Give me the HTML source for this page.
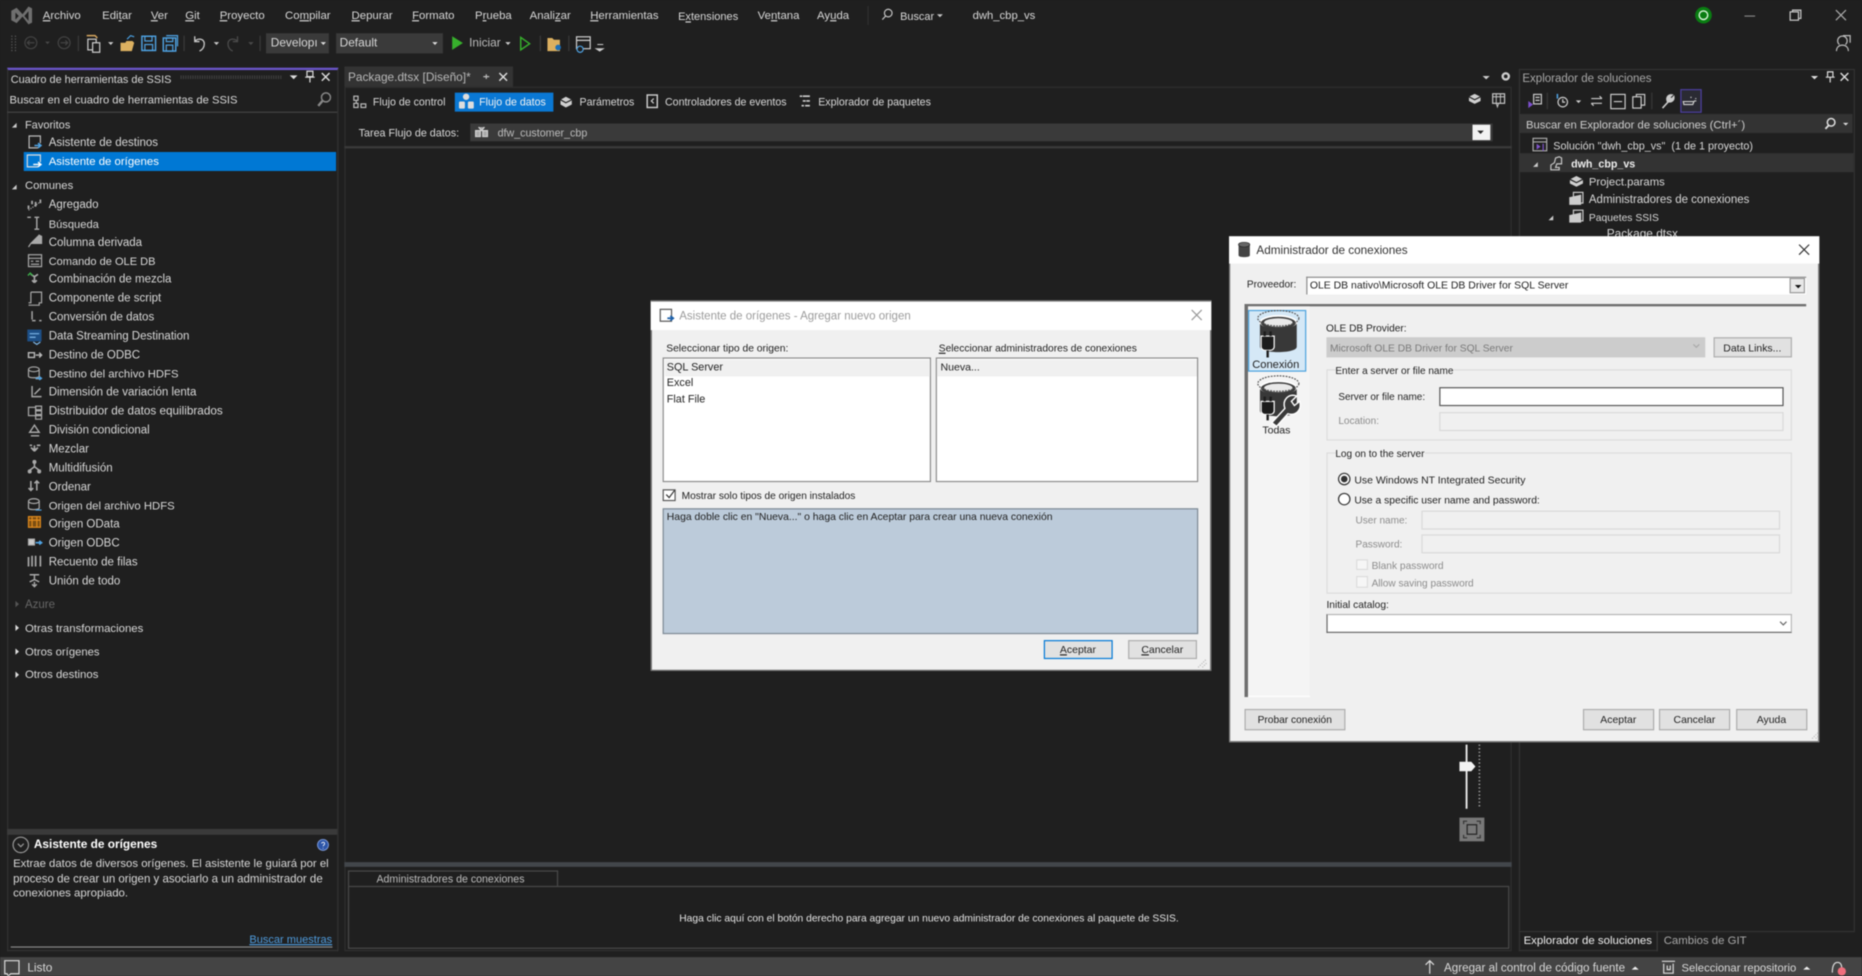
<!DOCTYPE html>
<html lang="es"><head><meta charset="utf-8"><title>dwh_cbp_vs</title>
<style>
html,body{margin:0;padding:0;width:1862px;height:976px;overflow:hidden;background:#1f1f1f}
#v{position:absolute;left:0;top:0;width:1568px;height:822px;transform:scale(1.1875);transform-origin:0 0;font:9.7px/12px "Liberation Sans",sans-serif;color:#d8d8d8;background:#1f1f1f;overflow:hidden;filter:blur(.4px)}
.t{position:absolute;white-space:nowrap;margin-top:-5px;line-height:12px}
.m{font-size:9.6px}
.b{position:absolute;box-sizing:border-box}
svg{position:absolute;left:0;top:0;overflow:visible}
.d{color:#222;font-size:8.7px;margin-top:-6px}
.g{color:#8c8c8c;font-size:8.45px;margin-top:-6px}
.btn{background:#e1e1e1;border:1px solid #adadad;color:#222;font-size:8.8px;text-align:center}
.f{background:#f0f0f0;border:1px solid #d9d9d9}
</style></head><body><div id="v">

<!-- panels -->
<div class="b" style="left:5.5px;top:57px;width:279px;height:744px;border:1px solid #333;border-top:2px solid #6a55c8"></div>
<div class="b" style="left:6px;top:93.5px;width:278px;height:1.5px;background:#454545"></div>
<div class="b" style="left:19.5px;top:128px;width:263.5px;height:16px;background:#0078d4"></div>
<div class="b" style="left:6px;top:698px;width:278px;height:4.5px;background:#3a3a3a"></div>
<div class="b" style="left:9px;top:796.5px;width:271px;height:1px;background:#8a8a8a"></div>

<!-- doc area -->
<div class="b" style="left:290px;top:56px;width:142px;height:17px;background:#333"></div>
<div class="b" style="left:290px;top:73px;width:983px;height:728px;border:1px solid #2f2f2f"></div>
<div class="b" style="left:383px;top:77.5px;width:83px;height:16.5px;background:#0a78d4"></div>
<div class="b" style="left:395.5px;top:104px;width:861px;height:15px;background:#3a3a3a"></div>
<div class="b" style="left:1239.5px;top:104.5px;width:15px;height:13.5px;background:#f2f2f2"></div>
<div class="b" style="left:290px;top:123px;width:983px;height:2px;background:#3a3a3a"></div>
<div class="b" style="left:290px;top:726px;width:983px;height:4px;background:#42464b"></div>
<div class="b" style="left:292.5px;top:732.5px;width:177px;height:13.5px;border:1px solid #4a4a4a;border-bottom:0"></div>
<div class="b" style="left:292.5px;top:746px;width:978.5px;height:53px;border:1px solid #4a4a4a;border-top:1.5px solid #4a4a4a"></div>

<!-- solution explorer -->
<div class="b" style="left:1278.5px;top:57.5px;width:283px;height:727px;border:1px solid #333"></div>
<div class="b" style="left:1278.5px;top:784px;width:117px;height:17px;border:1px solid #333;border-top:0"></div>
<div class="b" style="left:1395px;top:784px;width:1px;height:17px;background:#3a3a3a"></div>
<div class="b" style="left:1280px;top:96px;width:280px;height:16px;background:#333"></div>
<div class="b" style="left:1280px;top:129px;width:281px;height:15.5px;background:#333"></div>
<div class="b" style="left:1414.5px;top:75px;width:18px;height:20px;border:1px solid #4c3fa0;background:#2a2a33"></div>

<!-- status bar -->
<div class="b" style="left:0;top:805.5px;width:1568px;height:17px;background:#444"></div>

<!-- Toolbar dropdowns -->
<div class="b" style="left:224px;top:28px;width:53px;height:17px;background:#3a3a3a"></div>
<div class="b" style="left:282.5px;top:28px;width:90px;height:17px;background:#3a3a3a"></div>

<!-- Menu -->
<div class="t m" style="left:36px;top:13px"><u>A</u>rchivo</div>
<div class="t m" style="left:86px;top:13px">Edi<u>t</u>ar</div>
<div class="t m" style="left:127px;top:13px"><u>V</u>er</div>
<div class="t m" style="left:156px;top:13px"><u>G</u>it</div>
<div class="t m" style="left:185px;top:13px"><u>P</u>royecto</div>
<div class="t m" style="left:240px;top:13px">Co<u>m</u>pilar</div>
<div class="t m" style="left:296px;top:13px"><u>D</u>epurar</div>
<div class="t m" style="left:347px;top:13px"><u>F</u>ormato</div>
<div class="t m" style="left:400px;top:13px">P<u>r</u>ueba</div>
<div class="t m" style="left:446px;top:13px">Anali<u>z</u>ar</div>
<div class="t m" style="left:497px;top:13px"><u>H</u>erramientas</div>
<div class="t m" style="left:571px;top:13px;font-size:9.3px">E<u>x</u>tensiones</div>
<div class="t m" style="left:638px;top:13px">Ve<u>n</u>tana</div>
<div class="t m" style="left:688px;top:13px">Ay<u>u</u>da</div>
<div class="t m" style="left:758px;top:13px;font-size:9.2px">Buscar</div>
<div class="t m" style="left:819px;top:13px;font-size:9.5px">dwh_cbp_vs</div>

<div class="t" style="left:228px;top:36px;font-size:10px">Developı</div>
<div class="t" style="left:286px;top:36px;font-size:10px">Default</div>
<div class="t" style="left:395px;top:36px;font-size:10px;color:#bbb">Iniciar</div>

<!-- Toolbox -->
<div class="t" style="left:9px;top:65.5px;font-size:9.2px">Cuadro de herramientas de SSIS</div>
<div class="t" style="left:8px;top:84px;font-size:9.45px">Buscar en el cuadro de herramientas de SSIS</div>
<div class="t" style="left:21px;top:104px;font-size:9.3px">Favoritos</div>
<div class="t" style="left:41px;top:120px">Asistente de destinos</div>
<div class="t" style="left:41px;top:136px;color:#fff;font-size:9.6px">Asistente de orígenes</div>
<div class="t" style="left:21px;top:156px;font-size:9.5px">Comunes</div>
<div class="t" style="left:41px;top:172px">Agregado</div>
<div class="t" style="left:41px;top:187.5px;font-size:9.4px">Búsqueda</div>
<div class="t" style="left:41px;top:203.5px">Columna derivada</div>
<div class="t" style="left:41px;top:219px;font-size:9.3px">Comando de OLE DB</div>
<div class="t" style="left:41px;top:235px">Combinación de mezcla</div>
<div class="t" style="left:41px;top:251px">Componente de script</div>
<div class="t" style="left:41px;top:267px">Conversión de datos</div>
<div class="t" style="left:41px;top:283px">Data Streaming Destination</div>
<div class="t" style="left:41px;top:298.5px">Destino de ODBC</div>
<div class="t" style="left:41px;top:314.5px;font-size:9.5px">Destino del archivo HDFS</div>
<div class="t" style="left:41px;top:330px">Dimensión de variación lenta</div>
<div class="t" style="left:41px;top:346px;font-size:9.9px">Distribuidor de datos equilibrados</div>
<div class="t" style="left:41px;top:362px">División condicional</div>
<div class="t" style="left:41px;top:378px">Mezclar</div>
<div class="t" style="left:41px;top:394px">Multidifusión</div>
<div class="t" style="left:41px;top:409.5px">Ordenar</div>
<div class="t" style="left:41px;top:425.5px;font-size:9.55px">Origen del archivo HDFS</div>
<div class="t" style="left:41px;top:441px">Origen OData</div>
<div class="t" style="left:41px;top:457px">Origen ODBC</div>
<div class="t" style="left:41px;top:473px">Recuento de filas</div>
<div class="t" style="left:41px;top:489px">Unión de todo</div>
<div class="t" style="left:21px;top:508.5px;color:#666">Azure</div>
<div class="t" style="left:21px;top:528.5px;font-size:9.6px">Otras transformaciones</div>
<div class="t" style="left:21px;top:548.5px;font-size:9.5px">Otros orígenes</div>
<div class="t" style="left:21px;top:568px;font-size:9.6px">Otros destinos</div>
<div class="t" style="left:28.5px;top:711px;color:#fff;font-weight:bold;font-size:10px">Asistente de orígenes</div>
<div class="t" style="left:11px;top:727px;font-size:9.57px">Extrae datos de diversos orígenes. El asistente le guiará por el</div>
<div class="t" style="left:11px;top:739.5px;font-size:9.68px">proceso de crear un origen y asociarlo a un administrador de</div>
<div class="t" style="left:11px;top:752px;font-size:9.65px">conexiones apropiado.</div>
<div class="t" style="left:210px;top:789.5px;color:#4f9bdc;text-decoration:underline;font-size:9.3px">Buscar muestras</div>

<!-- Doc -->
<div class="t" style="left:293px;top:64.5px;color:#b9b9b9;font-size:10px">Package.dtsx [Diseño]*</div>
<div class="t" style="left:314px;top:85px;font-size:8.95px">Flujo de control</div>
<div class="t" style="left:403.5px;top:85px;font-size:8.95px;color:#f2f2f2">Flujo de datos</div>
<div class="t" style="left:488px;top:85px;font-size:8.95px">Parámetros</div>
<div class="t" style="left:560px;top:85px;font-size:8.95px">Controladores de eventos</div>
<div class="t" style="left:689px;top:85px;font-size:8.95px">Explorador de paquetes</div>
<div class="t" style="left:302px;top:111px;font-size:9.07px">Tarea Flujo de datos:</div>
<div class="t" style="left:419px;top:111px;font-size:9px;color:#bdbdbd">dfw_customer_cbp</div>
<div class="t" style="left:317px;top:738.5px;font-size:8.95px;color:#bdbdbd">Administradores de conexiones</div>
<div class="t" style="left:572px;top:771.5px;font-size:8.66px;color:#e4e4e4">Haga clic aquí con el botón derecho para agregar un nuevo administrador de conexiones al paquete de SSIS.</div>

<!-- Solution explorer text -->
<div class="t" style="left:1282px;top:66px;color:#a8a8a8">Explorador de soluciones</div>
<div class="t" style="left:1285px;top:104.5px;color:#cfcfcf;font-size:9.5px">Buscar en Explorador de soluciones (Ctrl+´)</div>
<div class="t" style="left:1308px;top:122px;font-size:9.1px">Solución "dwh_cbp_vs"&nbsp; (1 de 1 proyecto)</div>
<div class="t" style="left:1323px;top:137px;font-weight:bold;color:#eee;font-size:9px">dwh_cbp_vs</div>
<div class="t" style="left:1338px;top:152.5px;font-size:9.5px">Project.params</div>
<div class="t" style="left:1338px;top:167.5px">Administradores de conexiones</div>
<div class="t" style="left:1338px;top:182px;font-size:8.7px">Paquetes SSIS</div>
<div class="t" style="left:1353px;top:197px;font-size:10px">Package.dtsx</div>
<div class="t" style="left:1283px;top:792px;color:#eee;font-size:9.65px">Explorador de soluciones</div>
<div class="t" style="left:1401px;top:792px;color:#a8a8a8;font-size:9.6px">Cambios de GIT</div>

<!-- Status -->
<div class="t" style="left:23px;top:815px;font-size:10px">Listo</div>
<div class="t" style="left:1216px;top:815px;font-size:9.8px">Agregar al control de código fuente</div>
<div class="t" style="left:1416px;top:815px;font-size:9.5px">Seleccionar repositorio</div>

<!-- dark icons -->
<svg width="1568" height="822" viewBox="0 0 1568 822" fill="none" stroke-width="1">
<!-- VS logo -->
<path d="M9.500 9l4.500-2.500 5 5.500 5-6.500 3 1.500v12l-3 1.500-5-6.500-5 5.500-4.500-2.500z" fill="#6f6f6f"/>
<path d="M13 10.500v6l2.800-3zM24 9.500l-3.500 4 3.500 4z" fill="#1f1f1f"/>
<!-- search -->
<circle cx="748" cy="11" r="3.2" stroke="#c8c8c8"/><path d="M745.800 13.500l-2.800 3" stroke="#c8c8c8"/>
<path d="M789 12h5l-2.500 2.500z" fill="#c8c8c8" stroke="none"/>
<path d="M731 5v16" stroke="#2f2f2f"/>
<!-- title controls -->
<circle cx="1434.500" cy="12.800" r="7" fill="#0a7d12"/><circle cx="1434.500" cy="12.800" r="3.600" stroke="#d8f5d8" stroke-width="1.200"/>
<path d="M1469 13.500h9" stroke="#888"/>
<rect x="1507.500" y="10" width="7" height="7" stroke="#ccc"/><path d="M1509.500 10v-1.500h7v7h-2" stroke="#ccc"/>
<path d="M1546 8.500l8.500 8.500M1554.500 8.500l-8.500 8.500" stroke="#aaa"/>
<path d="M1549 37.500a4 4 0 1 1 5 0M1546.500 43c0-3 2-5 5-5s5 2 5 5M1552 30h6v6" stroke="#bdbdbd"/>
<!-- toolbar -->
<path d="M10 30v13M13 30v13" stroke="#5c5c5c" stroke-dasharray="1 1.400"/>
<circle cx="26" cy="36" r="5" stroke="#444"/><path d="M29 36h-6M25 34l-2 2 2 2" stroke="#444"/>
<path d="M38 35h4l-2 2.200z" fill="#4a4a4a"/>
<circle cx="54" cy="36" r="5" stroke="#444"/><path d="M51 36h6M55 34l2 2-2 2" stroke="#444"/>
<path d="M66 30v13M155 30v13M219 30v13M455 30v13M479 30v13" stroke="#3a3a3a"/>
<rect x="74" y="33" width="7" height="9" stroke="#cfcfcf"/><rect x="78" y="36" width="6" height="8" fill="#1f1f1f" stroke="#cfcfcf"/><path d="M73 30h7l2 2" stroke="#d9a860" stroke-width="1.200"/>
<path d="M91 35.500h4.500l-2.200 2.400z" fill="#ccc"/>
<path d="M101.500 43v-7h4l1-1.500h5l1.500 1.500-2 7z" fill="#dcb060"/><path d="M107 33l3-3 3 1" stroke="#4a9fe0"/>
<rect x="119.500" y="30.500" width="11.500" height="12" stroke="#4fa3e3" stroke-width="1.200"/><rect x="122" y="30.500" width="6" height="4" stroke="#4fa3e3"/><rect x="122" y="37.500" width="6.500" height="5" stroke="#4fa3e3"/>
<rect x="137.500" y="32" width="10.500" height="11" stroke="#4fa3e3" stroke-width="1.200"/><rect x="140" y="32" width="5.500" height="3" stroke="#4fa3e3"/><rect x="140" y="38" width="5.500" height="5" stroke="#4fa3e3"/><path d="M140 30h9.500v9" stroke="#4fa3e3"/>
<path d="M164 30.500v4.500h4M164 35c2-3 8-3 8 2 0 3-2 5-4 6" stroke="#c8c8c8" stroke-width="1.100"/>
<path d="M180 35.500h4.500l-2.200 2.400z" fill="#ccc"/>
<path d="M200 30.500v4.500h-4M200 35c-2-3-8-3-8 2 0 3 2 5 4 6" stroke="#4a4a4a" stroke-width="1.100"/>
<path d="M209 35.500h4.500l-2.200 2.400z" fill="#4a4a4a"/>
<path d="M270 35.500h4.500l-2.200 2.400z" fill="#ddd"/>
<path d="M364 35.500h4.500l-2.200 2.400z" fill="#ddd"/>
<path d="M380.800 30.500v11.500l9-5.800z" fill="#37b02c"/>
<path d="M425.500 35.500h4.500l-2.200 2.400z" fill="#ccc"/>
<path d="M438.500 31.500v10.500l7.500-5.200z" stroke="#37b02c" stroke-width="1.200"/>
<path d="M461 43v-11h4l1.500 1.500h5v9.500z" fill="#dcb060"/><circle cx="470" cy="40" r="2.400" fill="#1c6fb8"/>
<rect x="485.500" y="31" width="11.500" height="10" stroke="#cfcfcf"/><path d="M485.500 34h11.500" stroke="#cfcfcf"/><circle cx="488.500" cy="41.500" r="2.600" stroke="#4fa3e3" fill="#1f1f1f"/>
<path d="M503 37.500h5M502 41h6l-3 2z" fill="#ccc" stroke="#ccc" stroke-width=".8"/>
<!-- Toolbox title -->
<path d="M152 65h86" stroke="#3f3f3f" stroke-dasharray="1 1" stroke-width="3"/>
<path d="M244 63.500h6.500l-3.200 3.200z" fill="#ddd"/>
<path d="M258.500 60v4.500h5V60zM257 65h8M261 65v4.500" stroke="#ddd"/>
<path d="M271 61.500l6.500 6.500M277.500 61.500l-6.500 6.500" stroke="#ddd" stroke-width="1.200"/>
<circle cx="274.500" cy="82" r="3.800" stroke="#888" stroke-width="1.200"/><path d="M271.500 85l-3.500 4.200" stroke="#888" stroke-width="2"/>
<path d="M10 107.500l4-4v4zM10 159.500l4-4v4z" fill="#ccc"/>
<path d="M13 506l3 2.700-3 2.700z" fill="#555"/><path d="M13 526l3 2.700-3 2.700zM13 546l3 2.700-3 2.700zM13 565.500l3 2.700-3 2.700z" fill="#ddd"/>
<!-- wizards -->
<path d="M32 124.500h-7.500v-10h9.500v6" stroke="#bbb"/><path d="M29 122.500h5M32 120.500l2.500 2-2.500 2" stroke="#4fa3e3" stroke-width="1.300"/>
<path d="M32 140.500h-9v-10h11v6" stroke="#ddd"/><path d="M28 138.500h6M32 136.500l2.500 2-2.500 2" stroke="#fff" stroke-width="1.200"/>
<!-- tool icons -->
<g stroke="#a9a9a9">
<path d="M24 176v-3M27 172v-3M30 174v-4M34 171v-3" stroke-width="1.500"/><path d="M24 177l10-7" stroke-dasharray="1 1"/>
<path d="M23 183h3M31 183v10M29 183h4M29 193h4" stroke-width="1.200"/>
<path d="M24 208l2-3h6v-6l-6 6M33 198l2 1v6h-3z" fill="#a9a9a9"/>
<rect x="24" y="214.500" width="11" height="10"/><path d="M24 217.500h11M26 220h2M30 220h3M26 222.500h7"/>
<path d="M29 238v-5l-3-2M29 233l3-2M29 238l-2-2M29 238l2-2" stroke-width="1.400"/>
<path d="M26 246h9v9h-2v2H24" /><path d="M26 246v9h-2"/>
<path d="M27 262v7M27 270h3M33 270h2" stroke-width="1.200"/>
<path d="M24 301h5v-4h-5zM30 299h5M33 297l2 2-2 2" stroke="#b9b9b9" stroke-width="1.200"/>
<ellipse cx="28.500" cy="311" rx="4.500" ry="2"/><path d="M24 311v6c1 1.500 8 1.500 9 0v-6M30 319h5" />
<path d="M27 325v9h8M29 332l5-5" stroke-width="1.200"/>
<rect x="24" y="343" width="6" height="7"/><path d="M30 342h5v3h-5zM30 346h5v3h-5zM30 350h5v3h-5z"/>
<path d="M29 358l4 6h-8zM26 367h7" stroke-width="1.200"/>
<path d="M29 375v4l-3-2M29 379l3-2M29 380l-2-2M29 380l2-2M25 375h2M31 375h3" stroke-width="1.300"/>
<path d="M29 389v4l-4 3M29 393l4 3" stroke-width="1.300"/><circle cx="25" cy="397" r="1.200" fill="#a9a9a9"/><circle cx="33" cy="397" r="1.200" fill="#a9a9a9"/><circle cx="29" cy="389" r="1.200" fill="#a9a9a9"/>
<path d="M26 405v8M24 411l2 2 2-2M31 413v-8M29 407l2-2 2 2" stroke-width="1.300"/>
<ellipse cx="28.500" cy="422" rx="4.500" ry="2"/><path d="M24 422v6c1 1.500 8 1.500 9 0v-6"/>
<path d="M24 454h5v5h-5z" fill="#ccc"/>
<path d="M24 469v8M27 468v9M30 468v9M34 468v9" stroke-width="1.400"/>
<path d="M25 484h8M29 484v4l-4 2M29 488l4 2M29 490v4M27 492l2 2 2-2" stroke-width="1.200"/>
</g>
<path d="M23.500 232l2-2 2 2" stroke="#3db04a" stroke-width="1.200"/>
<rect x="23" y="277.500" width="12" height="10" fill="#1d4f86"/><path d="M25 281h8M25 284h5M28 288l3 2 3-2" stroke="#7db7e8"/>
<path d="M30 318.500h5M33 317l2 1.500-2 1.500" stroke="#4fa3e3"/><path d="M30 429.500h5" stroke="#4fa3e3"/>
<path d="M24 435h10v9h-10zM24 438h10M27 435v9M31 435v9" stroke="#e08a1e" fill="#7b4e12"/>
<path d="M30 457h4M33 455.500l2 1.500-2 1.500" stroke="#4fa3e3" stroke-width="1.400"/>
<!-- description head -->
<circle cx="17.500" cy="711.500" r="6.500" stroke="#999"/><path d="M15 710.500l2.500 2.500 2.500-2.500" stroke="#999"/>
<circle cx="272" cy="711.500" r="4.600" fill="#2c55a8" stroke="#7d9ad8" stroke-width=".8"/><path d="M270.800 710.300c.5-1.600 3-1.200 2.500.5-.2.600-1.200 1-1.200 1.800M272.100 714v.5" stroke="#fff" stroke-width=".7"/>
<!-- doc tab -->
<path d="M407 64.500h5M409.500 62.500v4" stroke="#bbb"/><path d="M420.500 61.500l6.500 6.500M427 61.500l-6.500 6.500" stroke="#ddd" stroke-width="1.200"/>
<!-- doc toolbar icons -->
<g stroke="#bcbcbc"><rect x="298" y="81" width="3.500" height="3.500"/><rect x="298" y="87" width="3.500" height="3.500"/><rect x="304" y="87.500" width="4" height="3"/><path d="M300 84.500v2.500"/></g>
<g fill="#ddd"><circle cx="392.500" cy="81.500" r="2.700"/><rect x="386.500" y="85.500" width="5" height="6" rx="1"/><rect x="394" y="85.500" width="5" height="6" rx="1"/></g>
<path d="M472 84l4.500-2.500 5 2.500v4l-5 2.500-4.500-2.500z" fill="#cfcfcf"/><path d="M472 84l4.500 2.500 5-2.500" stroke="#1f1f1f"/>
<rect x="545" y="80" width="8.500" height="10.500" stroke="#cfcfcf" stroke-width="1.200"/><path d="M550.500 83l-2 2 2 2" stroke="#cfcfcf"/>
<path d="M673.500 81h2M676 81h6M676 85h2.500M679 85h3M675 89h2M678 89h4" stroke="#cfcfcf" stroke-width="1.300"/>
<path d="M400.500 110v5h4v-5zM406.500 110v5h4v-5zM403 107l2.500 3 2.500-3" stroke="#d0d0d0" fill="#aaa"/>
<path d="M1244 110h5.500l-2.700 2.800z" fill="#222"/>
<path d="M1248.500 64h6l-3 2.800z" fill="#ccc"/>
<circle cx="1268" cy="64.300" r="2.600" stroke="#ccc" stroke-width="2"/>
<path d="M1237 81.500l4.800-2.500 5 2.500v3.500l-5 2.500-4.800-2.500z" fill="#cfcfcf"/><path d="M1237 81.500l4.800 2.500 5-2.500" stroke="#1f1f1f"/>
<rect x="1257" y="79" width="10" height="8" stroke="#c8c8c8"/><path d="M1260 79v8M1263.500 79v8M1257 81.500h10M1260 87l1 3 1-3" stroke="#c8c8c8" stroke-width=".8"/>
<!-- Sol exp -->
<path d="M1525 64h6l-3 2.800z" fill="#ddd"/>
<path d="M1539 60.500v4.500h4.500v-4.500zM1537.500 65h7.500M1541.200 65v4.500" stroke="#ddd"/>
<path d="M1550 61.500l6.500 6.500M1556.500 61.500l-6.500 6.500" stroke="#ddd" stroke-width="1.200"/>
<path d="M1287 91l4-3-4-3zM1295.500 80v10" fill="#7c4fcc"/>
<rect x="1291.500" y="79.500" width="6.500" height="8" stroke="#ccc"/><path d="M1293 82h3.500M1293 84.500h3.500" stroke="#ccc"/>
<path d="M1303 78v14M1391 78v14" stroke="#383838"/>
<circle cx="1316" cy="86" r="4" stroke="#ccc"/><path d="M1316 83.500v2.500h2" stroke="#ccc"/><path d="M1311.500 79v4" stroke="#4fa3e3" stroke-width="1.300"/>
<path d="M1327 84.500h4.500l-2.200 2.300z" fill="#ccc"/>
<path d="M1340 83h9M1347 81l2 2M1349 87h-9M1342 89l-2-2" stroke="#ccc"/>
<rect x="1356.500" y="79.500" width="12" height="12" stroke="#ccc"/><path d="M1359 85.500h7" stroke="#ccc"/>
<rect x="1375" y="81.500" width="7" height="9.500" stroke="#ccc"/><path d="M1378 81.500v-2h7v9h-3" stroke="#ccc"/>
<path d="M1400 91l5.500-6M1404 85c-1-3 1-5.500 4-5l-2 2 1.500 1.500 2-2c.5 3-2 5-5 4z" stroke="#ccc" stroke-width="1.300" fill="#ccc"/>
<path d="M1417.500 85.500h9l-1 2.500h-7.500zM1424 82.500v-1M1427.500 83h1M1426.500 85h2" stroke="#ccc"/>
<circle cx="1542" cy="103" r="3.200" stroke="#ddd" stroke-width="1.300"/><path d="M1540 105.500l-2.800 3" stroke="#ddd" stroke-width="1.600"/><path d="M1552 103.500h4.500l-2.200 2.200z" fill="#ddd"/>
<rect x="1291" y="116.500" width="11.500" height="10.500" stroke="#aaa"/><path d="M1291 119.500h11.500" stroke="#aaa"/><path d="M1294.500 125l2-1.500-2-1.500zM1299.500 121v6" stroke="#8055cc" fill="#8055cc"/>
<path d="M1291 140.500l4-4v4zM1304 185.500l4-4v4z" fill="#ccc"/>
<path d="M1306 142v-3l3-2 1-4 3-1 2 1v5h-4l-1 3h3v2h-7z" stroke="#c8c8c8"/>
<path d="M1322 151l5.500-2.800 5.500 2.800v3.500l-5.500 2.800-5.500-2.800z" fill="#cfcfcf"/><path d="M1322 151l5.500 2.800 5.500-2.800" stroke="#1f1f1f"/>
<path d="M1322 166v6h9v-8" fill="#ccc" stroke="#ccc"/><rect x="1325" y="162" width="8" height="9" stroke="#ccc"/>
<path d="M1322 181v6h9v-8" fill="#ccc" stroke="#ccc"/><rect x="1325" y="177" width="8" height="9" stroke="#ccc"/>
<!-- slider -->
<path d="M1235 627v54" stroke="#e8e8e8" stroke-width="1.600"/>
<path d="M1229 641.500h10l3.500 4-3.500 4h-10z" fill="#f2f2f2"/>
<path d="M1245.800 627v53" stroke="#aaa" stroke-width="1.400" stroke-dasharray="1 2"/>
<rect x="1229" y="688.500" width="21" height="20" fill="#787878"/>
<rect x="1235.500" y="694.500" width="8" height="8" stroke="#222"/><path d="M1232.500 694v-2.500h3M1243.500 691.500h3v2.500M1246.500 703v2.500h-3M1235.500 705.500h-3V703" stroke="#333"/>
<!-- status -->
<path d="M4 809h12v11h-7l-2 2-1-2H4z" stroke="#ddd"/>
<path d="M1204 820v-11M1200.500 812.500l3.500-3.500 3.500 3.500" stroke="#ddd"/>
<path d="M1374 816.500h6l-3-2.600z" fill="#eee"/>
<path d="M1518.500 816.500h6l-3-2.600z" fill="#eee"/>
<path d="M1399.500 809.500h11M1401 811.500v8h8v-8M1404 813v3.500h2.500V813" stroke="#ddd"/>
<path d="M1543 819c0-2 0-8 4-8.500s4 4 4 6" stroke="#ddd"/>
<circle cx="1551" cy="818" r="3.500" fill="#ef6e7c"/>
</svg>

<!-- Dialog 1 -->
<div class="b" style="left:548.3px;top:253.2px;width:471.5px;height:311.6px;background:#f0f0f0;border:1px solid #6b6b6b;border-top:0"></div>
<div class="b" style="left:548.3px;top:253.2px;width:471.5px;height:24.7px;background:#fff;border-top:1px solid #777"></div>
<div class="t" style="left:572px;top:265.5px;color:#9c9c9c;font-size:9.7px">Asistente de orígenes - Agregar nuevo origen</div>
<div class="t d" style="left:561px;top:292.5px">Seleccionar tipo de origen:</div>
<div class="t d" style="left:790.5px;top:292.5px;font-size:8.63px"><u>S</u>eleccionar administradores de conexiones</div>
<div class="b" style="left:558.3px;top:301.2px;width:226px;height:105.2px;background:#fff;border:1px solid #8a8a8a"></div>
<div class="b" style="left:787.6px;top:301.2px;width:221.8px;height:105.2px;background:#fff;border:1px solid #8a8a8a"></div>
<div class="b" style="left:559.5px;top:302.5px;width:223.5px;height:14px;background:#f0f0f0"></div>
<div class="b" style="left:789px;top:302.5px;width:219px;height:14px;background:#f0f0f0"></div>
<div class="t d" style="left:561.5px;top:308.5px;font-size:9.15px">SQL Server</div>
<div class="t d" style="left:561.5px;top:322px;font-size:9.15px">Excel</div>
<div class="t d" style="left:561.5px;top:335.5px;font-size:9.15px">Flat File</div>
<div class="t d" style="left:792px;top:308.5px;font-size:8.9px">Nueva...</div>
<div class="b" style="left:558.3px;top:411.5px;width:11.2px;height:10.2px;background:#fff;border:1px solid #555"></div>
<div class="t d" style="left:574px;top:417px;font-size:8.55px">Mostrar solo tipos de origen instalados</div>
<div class="b" style="left:558.3px;top:428px;width:451px;height:106px;background:#bccbda;border:1px solid #7f8a94"></div>
<div class="t d" style="left:561.5px;top:434.5px;font-size:8.76px">Haga doble clic en "Nueva..." o haga clic en Aceptar para crear una nueva conexión</div>
<div class="b btn" style="left:878.5px;top:538.5px;width:58.5px;height:16.5px;border:1.5px solid #0078d7;line-height:15px"><u>A</u>ceptar</div>
<div class="b btn" style="left:949.5px;top:538.5px;width:58.5px;height:16.5px;line-height:15px"><u>C</u>ancelar</div>

<!-- Dialog 2 -->
<div class="b" style="left:1034.7px;top:198.8px;width:497px;height:426.4px;background:#f0f0f0;border:1px solid #777;border-top:0"></div>
<div class="b" style="left:1034.7px;top:198.8px;width:497px;height:23.5px;background:#fff"></div>
<div class="t" style="left:1058px;top:210.5px;color:#333;font-size:9.9px">Administrador de conexiones</div>
<div class="t d" style="left:1050px;top:238.8px;font-size:8.5px">Proveedor:</div>
<div class="b" style="left:1099.6px;top:233px;width:421px;height:14.5px;background:#fff;border:1px solid #8a8a8a;border-bottom:0;border-right:0"></div>
<div class="t d" style="left:1103px;top:240.3px;font-size:8.8px">OLE DB nativo\Microsoft OLE DB Driver for SQL Server</div>
<div class="b" style="left:1507.4px;top:233.5px;width:13px;height:13.5px;background:#e8e8e8;border:1px solid #999"></div>
<div class="b" style="left:1048px;top:256px;width:472.7px;height:1.6px;background:#6f6f6f"></div>
<div class="b" style="left:1048px;top:256px;width:2.5px;height:331px;background:#6f6f6f"></div>
<div class="b" style="left:1050.5px;top:257.6px;width:52.5px;height:329px;background:#f4f4f4;border-bottom:1px solid #fff"></div>
<div class="b" style="left:1051.4px;top:260.5px;width:48.2px;height:52px;background:#d5e8f6;border:1px solid #4da3de"></div>
<div class="t d" style="left:1054.5px;top:306.5px;font-size:9.4px">Conexión</div>
<div class="t d" style="left:1063px;top:361.5px;font-size:8.9px">Todas</div>
<div class="t d" style="left:1116.6px;top:275.7px;font-size:8.55px">OLE DB Provider:</div>
<div class="b" style="left:1116.6px;top:283.5px;width:319.6px;height:17.5px;background:#ccc"></div>
<div class="t" style="left:1120px;top:292.5px;color:#7a7a7a;font-size:8.64px;margin-top:-6px">Microsoft OLE DB Driver for SQL Server</div>
<div class="b btn" style="left:1442.5px;top:283.5px;width:66.3px;height:17.5px;line-height:16px">Data Links...</div>

<div class="b" style="left:1117.3px;top:311px;width:391.5px;height:59.5px;border:1px solid #dcdcdc"></div>
<div class="t d" style="left:1124.5px;top:312px;background:#f0f0f0;font-size:8.45px">Enter a server or file name</div>
<div class="t d" style="left:1127px;top:334px;font-size:8.4px">Server or file name:</div>
<div class="b" style="left:1212px;top:326.2px;width:289.5px;height:15.8px;background:#fff;border:1px solid #555"></div>
<div class="t g" style="left:1127px;top:354.3px">Location:</div>
<div class="b f" style="left:1212px;top:347px;width:289.5px;height:15.7px"></div>

<div class="b" style="left:1117.3px;top:381.2px;width:391.5px;height:119.3px;border:1px solid #dcdcdc"></div>
<div class="t d" style="left:1124.5px;top:382px;background:#f0f0f0;font-size:8.45px">Log on to the server</div>
<div class="t d" style="left:1140.5px;top:403.5px;font-size:8.8px">Use Windows NT Integrated Security</div>
<div class="t d" style="left:1140.5px;top:420.5px;font-size:8.68px">Use a specific user name and password:</div>
<div class="t g" style="left:1141.5px;top:437.5px">User name:</div>
<div class="b f" style="left:1196.5px;top:430px;width:302.3px;height:15.7px"></div>
<div class="t g" style="left:1141.5px;top:458px">Password:</div>
<div class="b f" style="left:1196.5px;top:450px;width:302.3px;height:16px"></div>
<div class="b" style="left:1141.6px;top:470.7px;width:10.6px;height:9.6px;background:#f6f6f6;border:1px solid #dcdcdc"></div>
<div class="t g" style="left:1155px;top:476px;font-size:8.6px">Blank password</div>
<div class="b" style="left:1141.6px;top:485px;width:10.6px;height:9.6px;background:#f6f6f6;border:1px solid #dcdcdc"></div>
<div class="t g" style="left:1155px;top:490.5px;font-size:8.5px">Allow saving password</div>
<div class="t d" style="left:1117px;top:509px;font-size:8.6px">Initial catalog:</div>
<div class="b" style="left:1117.3px;top:516.5px;width:391.5px;height:16.2px;background:#fff;border:1px solid #b5b5b5;border-bottom:1px solid #666;border-left:1px solid #666"></div>

<div class="b btn" style="left:1048px;top:596.5px;width:84.6px;height:18.2px;line-height:17px;font-size:8.6px">Probar conexión</div>
<div class="b btn" style="left:1333px;top:596.5px;width:59.6px;height:18.2px;line-height:17px">Aceptar</div>
<div class="b btn" style="left:1397px;top:596.5px;width:59.8px;height:18.2px;line-height:17px">Cancelar</div>
<div class="b btn" style="left:1461.8px;top:596.5px;width:59.9px;height:18.2px;line-height:17px">Ayuda</div>

<!-- dialog icons -->
<svg width="1568" height="822" viewBox="0 0 1568 822" fill="none">
<!-- d1 -->
<rect x="556" y="260.500" width="9.500" height="10" stroke="#555"/><path d="M562 268h4.500M564.500 266l2.500 2-2.500 2" stroke="#1c5fa8" stroke-width="1.400"/>
<path d="M1003.500 261l8.500 8.500M1012 261l-8.500 8.500" stroke="#999"/>
<path d="M561 416.500l2.500 2.500 4.500-6" stroke="#333" stroke-width="1"/>
<path d="M1009 562l7-7M1012.500 562l3.500-3.500" stroke="#bbb" stroke-dasharray="1 1"/>
<!-- d2 -->
<path d="M1043 206v9c0 2 9.500 2 9.500 0v-9z" fill="#444"/><ellipse cx="1047.700" cy="206" rx="4.800" ry="2" fill="#666" stroke="#222" stroke-width=".5"/>
<path d="M1515 206l8.500 8.500M1523.500 206l-8.500 8.500" stroke="#333"/>
<path d="M1511.500 240h5.500l-2.700 2.800z" fill="#111"/>
<path d="M1526 622l5-5M1529 622l2-2" stroke="#bbb" stroke-dasharray="1 1"/>
<!-- cylinder conexion -->
<ellipse cx="1076.500" cy="272" rx="15.500" ry="6" fill="#3c3c3c" stroke="#fff" stroke-width="1.500"/>
<path d="M1061 272v20c0 6 31 6 31 0v-20c-1 6-30 6-31 0z" fill="#383838"/>
<ellipse cx="1076.500" cy="271.600" rx="12" ry="3.600" fill="#e9e9e9"/>
<ellipse cx="1076.500" cy="268" rx="17.300" ry="6.500" stroke="#555" stroke-dasharray="1.500 1"/>
<path d="M1062 283h11v9c0 2-2 3-3.500 3h-4c-1.500 0-3.500-1-3.500-3z" fill="#1c1c1c" stroke="#fff"/><path d="M1065 279v4M1070 279v4M1067.500 295v6" stroke="#1c1c1c" stroke-width="2"/>
<!-- cylinder todas -->
<ellipse cx="1076.500" cy="327" rx="15.500" ry="6" fill="#3c3c3c" stroke="#fff" stroke-width="1.500"/>
<path d="M1061 327v19c0 6 31 6 31 0v-19c-1 6-30 6-31 0z" fill="#383838"/>
<ellipse cx="1076.500" cy="326.600" rx="12" ry="3.600" fill="#e9e9e9"/>
<ellipse cx="1076.500" cy="323" rx="17.300" ry="6.500" stroke="#555" stroke-dasharray="1.500 1"/>
<path d="M1062 338h11v8c0 2-2 3-3.500 3h-4c-1.500 0-3.500-1-3.500-3z" fill="#1c1c1c" stroke="#fff"/><path d="M1065 334v4M1070 334v4M1067.500 349v5" stroke="#1c1c1c" stroke-width="2"/>
<path d="M1071 356l11-12c-2.500-7 3-13 10-10.500l-4.500 4.500 2.500 3.500 4.500-3.500c2 7-3 12.500-10 10.500l-9.500 10.500z" fill="#3a3a3a" stroke="#fff" stroke-width="1.200"/>
<path d="M1426 290l2.500 2.500 2.500-2.500" stroke="#a8a8a8"/>
<path d="M1499 523.500l2.700 2.700 2.700-2.700" stroke="#666"/>
<circle cx="1132" cy="403.400" r="4.800" fill="#fff" stroke="#333"/><circle cx="1132" cy="403.400" r="2.800" fill="#333"/>
<circle cx="1132" cy="420.300" r="4.800" fill="#fff" stroke="#333"/>
</svg>

</div></body></html>
